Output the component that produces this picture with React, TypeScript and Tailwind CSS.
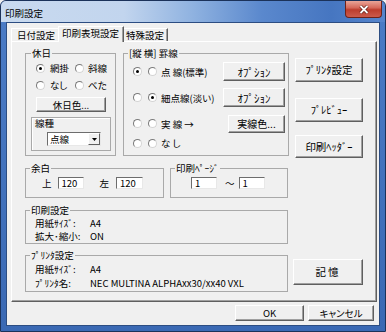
import React from "react";

const btnCls =
  "flex items-center justify-center bg-[#f0f0f0] border border-t-white border-l-white border-r-[#5f5f5f] border-b-[#5f5f5f] shadow-[inset_-1px_-1px_0_#a0a0a0]";

function Btn({ className, children }: { className: string; children: React.ReactNode }) {
  return <div className={`${btnCls} ${className}`}>{children}</div>;
}

function H({ children, className = "" }: { children: React.ReactNode; className?: string }) {
  return <span className={`[font-feature-settings:normal] ${className}`}>{children}</span>;
}

function Radio({ checked }: { checked?: boolean }) {
  return (
    <span className="w-[9px] h-[9px] shrink-0 rounded-full bg-white border border-t-[#7a7a7a] border-l-[#7a7a7a] border-r-[#d4d4d4] border-b-[#d4d4d4] flex items-center justify-center">
      {checked && <span className="w-[3px] h-[3px] rounded-full bg-black" />}
    </span>
  );
}

function Group({
  title,
  className,
  children,
  legendCls = "ml-[4px]",
}: {
  title: React.ReactNode;
  className: string;
  children: React.ReactNode;
  legendCls?: string;
}) {
  return (
    <fieldset className={`border border-[#a9a9a9] ${className}`}>
      <legend className={`${legendCls} px-[1px] leading-[12px]`}>{title}</legend>
      {children}
    </fieldset>
  );
}

function Edit({ value, className }: { value: string; className: string }) {
  return (
    <div
      className={`h-[12px] bg-white border border-t-[#6d6d6d] border-l-[#6d6d6d] border-r-[#e8e8e8] border-b-[#e8e8e8] pl-[3px] leading-[10px] ${className}`}
    >
      {value}
    </div>
  );
}

export default function App() {
  return (
    <div className="w-[386px] h-[332px] overflow-hidden bg-[#f0f0f0] font-['Noto_Sans_CJK_JP','Noto_Sans_CJK_SC',sans-serif] [font-feature-settings:'palt'] text-[9.5px] leading-[12px] text-black">
      <div className="w-full h-full flex flex-col border border-[#1b325a] rounded-t-[6px] bg-[linear-gradient(180deg,#4b7cc6,#3a69b4)]">
        {/* title bar */}
        <div className="h-[21px] shrink-0 flex rounded-t-[5px] bg-[linear-gradient(90deg,#c9daef_0%,#c2d5ee_32%,#8fb2e0_50%,#5a88cd_68%,#4676c1_86%,#5685cc_100%)]">
          <span className="ml-[4px] mt-[6px] h-[12px]">印刷設定</span>
          <div className="ml-auto mr-[3px] w-[37px] h-[17px] rounded-b-[4px] border border-t-0 border-[#6e2219] bg-[linear-gradient(180deg,#e9a598_0%,#d6695a_42%,#bd3d2d_55%,#cc5b4c_100%)] flex items-center justify-center">
            <svg width="10" height="9" viewBox="0 0 10 9">
              <path d="M1.5 1 L8.5 8 M8.5 1 L1.5 8" stroke="#5a1a12" strokeWidth="3.2" />
              <path d="M1.5 1 L8.5 8 M8.5 1 L1.5 8" stroke="#ffffff" strokeWidth="1.8" />
            </svg>
          </div>
        </div>

        {/* client area */}
        <div className="flex-1 mx-[5px] mb-[5px] border border-[#2c4d82] bg-[#f0f0f0] flex flex-col">
          <div className="pt-[3px] pl-[4px] pr-[2px] flex flex-col">
            {/* tabs */}
            <div className="h-[15px] flex items-end relative z-10">
              <div className="w-[47px] h-[13px] pl-[5px] border-t border-l border-white">日付設定</div>
              <div className="w-[66px] h-[16px] -mb-[1px] pl-[3px] bg-[#f0f0f0] border-t border-l border-r border-t-white border-l-white border-r-[#5f5f5f] shadow-[inset_-1px_0_0_#a0a0a0]">
                印刷表現設定
              </div>
              <div className="w-[44px] h-[13px] pl-[2px] border-t border-r border-t-white border-r-[#5f5f5f] shadow-[inset_-1px_0_0_#a0a0a0]">
                特殊設定
              </div>
            </div>

            {/* tab panel */}
            <div className="h-[261px] border border-t-white border-l-white border-r-[#5f5f5f] border-b-[#5f5f5f] shadow-[inset_-1px_-1px_0_#a0a0a0] flex">
              {/* left column */}
              <div className="ml-[13px] mt-[5px] w-[264px] flex flex-col">
                <div className="flex gap-[7px]">
                  {/* 休日 */}
                  <Group title="休日" className="w-[91px] h-[109px]" legendCls="ml-[5px]">
                    <div className="mt-[3px] pl-[10px] flex items-center h-[12px]">
                      <div className="w-[39px] flex items-center">
                        <Radio checked />
                        <span className="ml-[5px]">網掛</span>
                      </div>
                      <div className="flex items-center">
                        <Radio />
                        <span className="ml-[4px]">斜線</span>
                      </div>
                    </div>
                    <div className="mt-[5px] pl-[10px] flex items-center h-[12px]">
                      <div className="w-[39px] flex items-center">
                        <Radio />
                        <span className="ml-[5px]">なし</span>
                      </div>
                      <div className="flex items-center">
                        <Radio />
                        <span className="ml-[4px]">べた</span>
                      </div>
                    </div>
                    <Btn className="mt-[6px] ml-[10px] w-[70px] h-[15px]">休日色...</Btn>
                    <div className="mt-[5px] ml-[5px] w-[80px] h-[34px] border border-[#a9a9a9] shadow-[inset_1px_1px_0_#ffffff] flex flex-col">
                      <span className="pl-[3px] leading-[10px]">線種</span>
                      <div className="ml-[15px] mt-[4px] w-[54px] h-[14px] bg-white border border-t-[#6d6d6d] border-l-[#6d6d6d] border-r-[#e8e8e8] border-b-[#e8e8e8] flex items-center">
                        <span className="pl-[2px] flex-1 leading-[12px]">点線</span>
                        <div className="w-[12px] h-[12px] bg-[#f0f0f0] border border-t-white border-l-white border-r-[#5f5f5f] border-b-[#5f5f5f] flex items-center justify-center">
                          <svg width="5" height="3" viewBox="0 0 5 3">
                            <path d="M0 0 H5 L2.5 3 Z" fill="#000" />
                          </svg>
                        </div>
                      </div>
                    </div>
                  </Group>

                  {/* 罫線 */}
                  <Group title="[縦 横] 罫線" className="w-[166px] h-[109px]">
                    <div className="mt-[3px] h-[19px] pl-[9px] pr-[3px] flex items-center">
                      <Radio checked />
                      <span className="ml-[6px]">
                        <Radio />
                      </span>
                      <span className="ml-[4px]">点 線(標準)</span>
                      <Btn className="ml-auto w-[62px] h-[19px]">
                        <H className="text-[11px]">ｵﾌﾟｼｮﾝ</H>
                      </Btn>
                    </div>
                    <div className="mt-[7px] h-[19px] pl-[9px] pr-[3px] flex items-center">
                      <Radio />
                      <span className="ml-[6px]">
                        <Radio checked />
                      </span>
                      <span className="ml-[4px]">細点線(淡い)</span>
                      <Btn className="ml-auto w-[62px] h-[19px]">
                        <H className="text-[11px]">ｵﾌﾟｼｮﾝ</H>
                      </Btn>
                    </div>
                    <div className="mt-[7px] h-[19px] pl-[9px] pr-[3px] flex items-center">
                      <Radio />
                      <span className="ml-[6px]">
                        <Radio />
                      </span>
                      <span className="ml-[4px]">実 線 →</span>
                      <Btn className="ml-auto w-[57px] h-[18px] text-[10px]">実線色...</Btn>
                    </div>
                    <div className="mt-[4px] h-[12px] pl-[9px] pr-[3px] flex items-center">
                      <Radio />
                      <span className="ml-[6px]">
                        <Radio />
                      </span>
                      <span className="ml-[4px]">な し</span>
                    </div>
                  </Group>
                </div>

                {/* 余白 / 印刷ページ */}
                <div className="mt-[6px] flex gap-[6px]">
                  <Group title="余白" className="w-[139px] h-[36px]">
                    <div className="mt-[3px] h-[12px] pl-[16px] flex items-center">
                      <span>上</span>
                      <Edit value="120" className="ml-[6px] w-[26px]" />
                      <span className="ml-[16px]">左</span>
                      <Edit value="120" className="ml-[7px] w-[27px]" />
                    </div>
                  </Group>
                  <Group title={<H>印刷ﾍﾟｰｼﾞ</H>} className="w-[118px] h-[36px]">
                    <div className="mt-[3px] h-[12px] pl-[20px] flex items-center">
                      <Edit value="1" className="w-[26px]" />
                      <span className="ml-[8px]">～</span>
                      <Edit value="1" className="ml-[4px] w-[26px]" />
                    </div>
                  </Group>
                </div>

                {/* 印刷設定 */}
                <Group title="印刷設定" className="mt-[6px] w-[263px] h-[40px]">
                  <div className="mt-[1px] pl-[9px] flex flex-col leading-[13px]">
                    <div className="flex">
                      <H className="w-[55px]">用紙ｻｲｽﾞ:</H>
                      <span>A4</span>
                    </div>
                    <div className="flex">
                      <H className="w-[55px]">拡大･縮小:</H>
                      <span>ON</span>
                    </div>
                  </div>
                </Group>

                {/* ﾌﾟﾘﾝﾀ設定 */}
                <Group title={<H>ﾌﾟﾘﾝﾀ設定</H>} className="mt-[5px] w-[263px] h-[43px]">
                  <div className="mt-[1px] pl-[9px] flex flex-col leading-[14px]">
                    <div className="flex">
                      <H className="w-[55px]">用紙ｻｲｽﾞ:</H>
                      <span>A4</span>
                    </div>
                    <div className="flex">
                      <H className="w-[55px]">ﾌﾟﾘﾝﾀ名:</H>
                      <span>NEC MULTINA ALPHAxx30/xx40 VXL</span>
                    </div>
                  </div>
                </Group>
              </div>

              {/* right column */}
              <div className="ml-[6px] mt-[16px] flex flex-col">
                <Btn className="w-[68px] h-[24px]">
                  <H className="text-[10.5px]">ﾌﾟﾘﾝﾀ設定</H>
                </Btn>
                <Btn className="mt-[16px] w-[68px] h-[24px]">
                  <H className="text-[10.5px]">ﾌﾟﾚﾋﾞｭｰ</H>
                </Btn>
                <Btn className="mt-[13px] w-[68px] h-[23px]">
                  <H className="text-[10.5px]">印刷ﾍｯﾀﾞｰ</H>
                </Btn>
                <Btn className="mt-[101px] -ml-[2px] w-[70px] h-[26px] text-[10.5px] tracking-[2px]">記憶</Btn>
              </div>
            </div>
          </div>

          {/* bottom buttons */}
          <div className="mt-[3px] pr-[5px] flex justify-end gap-[4px]">
            <Btn className="w-[69px] h-[16px]">OK</Btn>
            <Btn className="w-[66px] h-[16px]">キャンセル</Btn>
          </div>
        </div>
      </div>
    </div>
  );
}
